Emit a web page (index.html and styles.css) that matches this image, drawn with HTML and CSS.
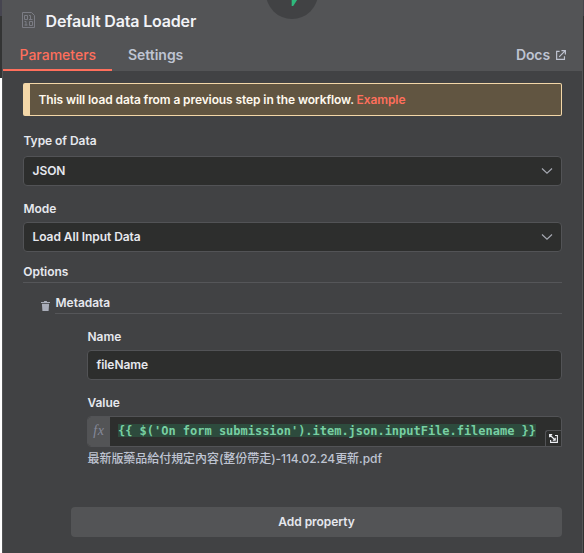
FILE: index.html
```html
<!DOCTYPE html>
<html lang="en">
<head>
<meta charset="utf-8">
<title>Default Data Loader</title>
<link rel="stylesheet" href="styles.css">
</head>
<body>
<main class="panel">
  <header class="header">
    <div class="node-badge"><svg width="52" height="52" viewBox="0 0 52 52"><path d="M25.700 28h8v7l-6.500 10h-1.500z" fill="#2fb97c"/></svg></div>
    <div class="title-row">
      <svg class="file-icon" width="13" height="16" viewBox="0 0 13 16" fill="none" stroke="#7b7c84"><path d="M.5.5h9l3 3v12H.5z"/><path d="M2.500 3.500h3v4h-3zM7 3.500h1.500v4M7 7.500h3.500M2.500 9.500H4v4M2.500 13h3M7.500 9.500h3v4h-3z"/></svg>
      <h1 class="title">Default Data Loader</h1>
    </div>
    <nav class="tabs">
      <span class="tab tab-active">Parameters</span>
      <span class="tab tab-settings">Settings</span>
      <span class="docs"><span>Docs</span><svg width="10" height="10" viewBox="0 0 11 11" fill="none" stroke="#bfc4d2" stroke-width="1.300"><path d="M4 1.600H.7v8.700h8.600V7M6 .7h4.300V5M10 1 3.500 7.500"/></svg></span>
    </nav>
  </header>
  <section class="content">
    <div class="callout"><span>This will load data from a previous step in the workflow. <b class="link">Example</b></span></div>
    <div class="label label-first">Type of Data</div>
    <div class="field"><span>JSON</span><svg class="chevron" width="12" height="8" viewBox="0 0 12 8"><path d="M1 1.500 6 6.200l5-4.700"/></svg></div>
    <div class="label label-mode">Mode</div>
    <div class="field"><span>Load All Input Data</span><svg class="chevron" width="12" height="8" viewBox="0 0 12 8"><path d="M1 1.500 6 6.200l5-4.700"/></svg></div>
    <div class="section-title">Options</div>
    <div class="meta">
      <svg class="trash" width="9" height="10" viewBox="0 0 9 10"><path d="M0 .9h2.800L3.300 0h2.400l.5.900H9v1.200H0zM.9 2.800h7.200L7.600 10H1.400z" fill="#a9adb9"/></svg>
      <div class="meta-title">Metadata</div>
    </div>
    <div class="group">
      <div class="label">Name</div>
      <div class="field"><span>fileName</span></div>
      <div class="label label-value">Value</div>
      <div class="expression">
        <span class="fx">fx</span>
        <code class="code"><span class="token">{{ $('On form submission').item.json.inputFile.filename }}</span></code>
        <span class="expand"><svg width="9" height="9" viewBox="0 0 9 9" fill="none" stroke="#eef0f5" stroke-width="1.100"><path d="M6 1.500h2.400v6.900H1.600V6M.6 3.200V.6h2.600M1 1l5 5M3.800 6.200h2.400V3.800"/></svg></span>
      </div>
      <div class="result">最新版藥品給付規定內容(整份帶走)-114.02.24更新.pdf</div>
    </div>
    <div class="add">Add property</div>
  </section>
</main>
</body>
</html>
```
FILE: styles.css
```css
* { box-sizing: border-box; }
body {
  margin: 0;
  width: 584px;
  height: 553px;
  overflow: hidden;
  background: linear-gradient(#464550 0 16px, #333434 16px 78px, #fff 78px) 0 0 / 2px 100% no-repeat, linear-gradient(#46444a 0 16px, #30302f 16px) 0 0 / 100% 100%;
  font: 600 12px/16px Inter, "Noto Sans CJK TC", sans-serif;
  letter-spacing: -.05px;
  color: #e6e8ee;
}
.panel {
  margin-left: 2px;
  width: 581px;
  height: 553px;
  background: #414244;
  border: solid #535456;
  border-width: 0 1px;
}
.header {
  position: relative;
  height: 71px;
  background: #535456;
  overflow: hidden;
}
.node-badge {
  position: absolute;
  left: 263px;
  top: -33px;
  width: 52px;
  height: 52px;
  border-radius: 50%;
  background: #414244;
}
.node-badge svg { display: block; margin-top: -6px; }
.title-row { display: flex; padding: 12px 0 0 19px; height: 42px; }
.title { margin: -1px 0 0 10.5px; font-size: 16px; line-height: 20px; font-weight: 600; color: #f2f3f7; letter-spacing: -.16px; }
.tabs { display: flex; height: 29px; letter-spacing: 0; }
.tab { padding: 3px 16px 0; height: 29px; font-size: 14px; line-height: 20px; }
.tab-active { width: 109px; padding-left: 16.5px; color: #ff6f5c; border-bottom: 2px solid #ff6f5c; font-weight: 500; }
.tab-settings, .docs { color: #bfc4d2; }
.tab-settings { letter-spacing: -.03px; }
.docs { display: flex; margin-left: auto; padding: 3px 16px 0 0; font-size: 14px; line-height: 20px; letter-spacing: -.1px; }
.docs svg { margin: 5px 0 0 6px; }
.content { padding: 12px 20px 0; }
.callout {
  height: 33px;
  padding: 8px 8px 0 8.5px;
  background: #615541;
  border: 1px solid #f3d7a8;
  border-left-width: 7px;
  border-radius: 2px;
  color: #fff9ee;
  letter-spacing: -.1px;
  white-space: nowrap;
}
.link { color: #ff6f5c; font-weight: 600; }
.label { height: 21px; padding-left: .5px; line-height: 16px; }
.label-first { margin-top: 17px; height: 23px; }
.label-mode { margin-top: 15px; }
.field {
  display: flex;
  align-items: center;
  justify-content: space-between;
  height: 30px;
  padding: 0 8px 0 8.5px;
  background: #2d2e2d;
  border: 1px solid #525356;
  border-radius: 4px;
}
.chevron { fill: none; stroke: #a5a8b1; stroke-width: 1.2; }
.section-title { margin-top: 12px; height: 19px; padding-left: .3px; border-bottom: 1px solid #555659; }
.meta { display: flex; margin: 12px 0 0 18px; }
.trash { margin: 6px 5px 0 0; }
.meta-title { flex: 1; height: 19px; padding-left: .6px; border-bottom: 1px solid #555659; }
.group { margin: 15px 0 0 64px; }
.label-value { margin-top: 15px; }
.expression {
  position: relative;
  display: flex;
  height: 31px;
  background: #2d2e2d;
  border: 1px solid #525356;
  border-radius: 4px 4px 0 4px;
  overflow: hidden;
}
.fx { width: 22px; background: #535456; color: #85899a; text-align: center; font: italic 14px/27px "Liberation Serif", serif; letter-spacing: .6px; }
.code { padding: 7px 0 0 8px; white-space: nowrap; font: 700 12px/13px "DejaVu Sans Mono", monospace; letter-spacing: -.018px; color: #78cfa2; }
.token { display: block; padding-top: 1px; height: 13px; line-height: 12px; background: #2d4b3d; }
.expand {
  position: absolute;
  right: 0;
  bottom: 0;
  width: 16px;
  height: 16px;
  padding: 3px 0 0 3px;
  background: #2d2e2d;
  border: solid #525356;
  border-width: 1px 0 0 1px;
  border-radius: 3px 0 0;
}
.expand svg { display: block; }
.result { margin-top: 4px; height: 16px; padding-left: .5px; font-weight: 500; color: #bfc4d2; }
.add { margin: 40px 0 0 48px; height: 30px; border-radius: 4px; background: #535456; text-align: center; line-height: 30px; }
```
